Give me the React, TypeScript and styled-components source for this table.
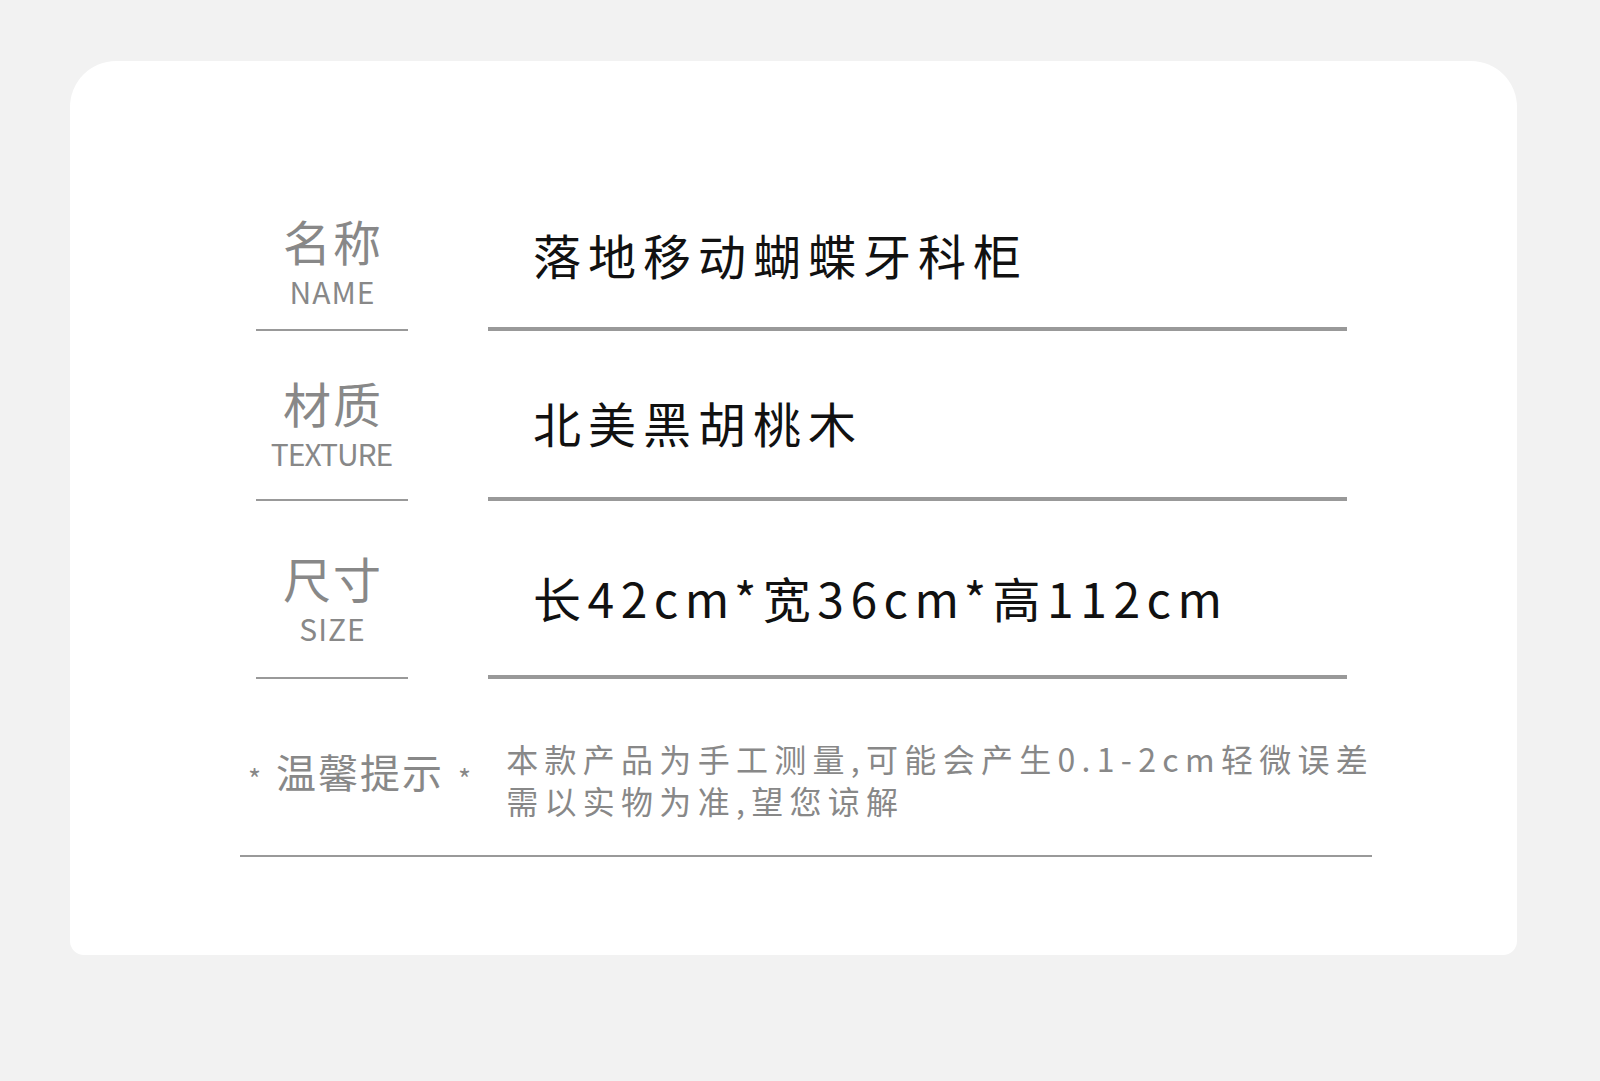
import React from "react";
import styled, { createGlobalStyle } from "styled-components";

const GlobalStyle = createGlobalStyle`
  *, *::before, *::after {
    box-sizing: border-box;
    margin: 0;
    padding: 0;
  }

  body {
    margin: 0;
    background: #f2f2f2;
    font-family: "Noto Sans CJK SC", "Noto Sans", sans-serif;
  }
`;

const Page = styled.div`
  min-height: 1081px;
  padding: 61px 0 0 70px;
  background: #f2f2f2;
`;

const Card = styled.div`
  width: 1447px;
  height: 894px;
  padding-top: 108px;
  background: #fff;
  border-radius: 46px 46px 14px 14px;
`;

const Table = styled.div`
  display: flex;
  flex-direction: column;
  margin-left: 186px;
`;

const Row = styled.div`
  display: grid;
  grid-template-columns: 152px 859px;
  column-gap: 80px;
`;

const LabelCell = styled.div<{ $pt: number; $pb: number }>`
  display: flex;
  flex-direction: column;
  align-items: center;
  padding: ${(p) => p.$pt}px 0 ${(p) => p.$pb}px;
  border-bottom: 2px solid #999;
  color: #888;
`;

const LabelCn = styled.div`
  font-size: 48px;
  line-height: 48px;
  letter-spacing: 2px;
  margin-right: -2px;
`;

const LabelEn = styled.div<{ $ls: number }>`
  margin-top: 12px;
  font-size: 30px;
  line-height: 30px;
  letter-spacing: ${(p) => p.$ls}px;
  margin-right: ${(p) => -p.$ls}px;
`;

const ValueCell = styled.div<{ $pt: number; $pb: number; $ls: number }>`
  display: flex;
  align-items: center;
  padding: ${(p) => p.$pt}px 0 ${(p) => p.$pb}px 45px;
  border-bottom: 4px solid #999;
  color: #111;
  font-size: 48px;
  line-height: 48px;
  letter-spacing: ${(p) => p.$ls}px;
  white-space: nowrap;
`;

const Tip = styled.div`
  display: flex;
  align-items: flex-start;
  width: 1132px;
  margin: 58px 0 0 170px;
  padding: 0 0 34px 8px;
  border-bottom: 2px solid #999;
  color: #888;
`;

const TipHead = styled.div`
  display: flex;
  flex-shrink: 0;
  align-items: center;
  height: 40px;
  margin-top: 14px;
  white-space: nowrap;
`;

const Star = styled.span`
  font-size: 28px;
  line-height: 1;
  padding-top: 14px;
`;

const TipTitle = styled.span`
  margin: 0 14px 0 15px;
  font-size: 40px;
  line-height: 40px;
  letter-spacing: 2px;
`;

const TipText = styled.p`
  flex-shrink: 0;
  margin-left: 35px;
  font-size: 32px;
  line-height: 42px;
  letter-spacing: 6.3px;
  white-space: nowrap;
`;

const rows = [
  { cn: "名称", en: "NAME", enLs: 1, value: "落地移动蝴蝶牙科柜", ls: 7, pt: 47, pb: 23, vpt: 41, vpb: 29 },
  { cn: "材质", en: "TEXTURE", enLs: -1, value: "北美黑胡桃木", ls: 7, pt: 47, pb: 31, vpt: 47, vpb: 31 },
  { cn: "尺寸", en: "SIZE", enLs: 1, value: "长42cm*宽36cm*高112cm", ls: 6.5, pt: 52, pb: 34, vpt: 52, vpb: 34 },
];

const App = () => {
  return (
    <>
      <GlobalStyle />
      <Page>
        <Card>
          <Table>
            {rows.map((r) => (
              <Row key={r.cn}>
                <LabelCell $pt={r.pt} $pb={r.pb}>
                  <LabelCn>{r.cn}</LabelCn>
                  <LabelEn $ls={r.enLs}>{r.en}</LabelEn>
                </LabelCell>
                <ValueCell $pt={r.vpt} $pb={r.vpb} $ls={r.ls}>
                  {r.value}
                </ValueCell>
              </Row>
            ))}
          </Table>
          <Tip>
            <TipHead>
              <Star>*</Star>
              <TipTitle>温馨提示</TipTitle>
              <Star>*</Star>
            </TipHead>
            <TipText>
              本款产品为手工测量,可能会产生0.1-2cm轻微误差
              <br />
              需以实物为准,望您谅解
            </TipText>
          </Tip>
        </Card>
      </Page>
    </>
  );
};

export default App;
